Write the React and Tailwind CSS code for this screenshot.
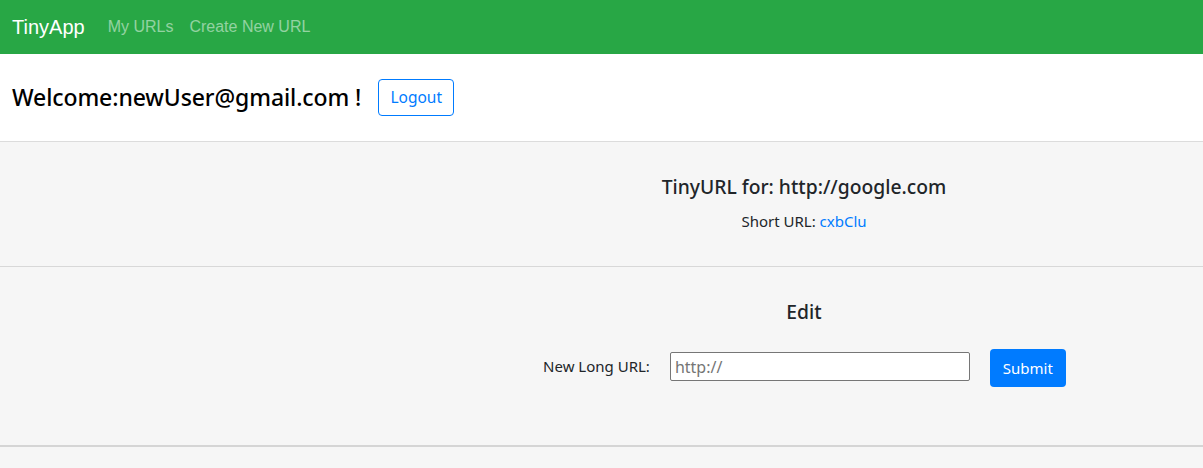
export default function App() {
  const body = { fontFamily: '"Noto Sans", "Open Sans", sans-serif' };
  return (
    <div className="min-h-[468px] bg-[#f6f6f6] text-[#212529]" style={body}>
      <nav
        className="flex h-[54px] items-center bg-[#28a745] pl-3"
        style={{ fontFamily: '"Liberation Sans", Arial, sans-serif' }}
      >
        <span className="mr-[23px] text-[20px] text-white">TinyApp</span>
        <span className="mr-4 text-[16px] text-white/50">My URLs</span>
        <span className="text-[16px] text-white/50">Create New URL</span>
      </nav>

      <div className="flex h-[88px] items-center border-b border-[#dcdcdc] bg-white pl-3">
        <h3 className="text-[23px] font-medium tracking-[-0.1px] text-black">Welcome:newUser@gmail.com !</h3>
        <button className="ml-[17px] h-[37px] w-[76px] rounded-[4px] border border-[#007bff] text-[15.5px] text-[#007bff]">
          Logout
        </button>
      </div>

      <div className="grid h-[125px] grid-cols-[405px_1fr] border-b border-[#d8d8d8]">
        <div />
        <div className="flex flex-col items-center pt-[33px]">
          <h5 className="text-[19.3px] font-medium leading-[24px]">TinyURL for: http://google.com</h5>
          <p className="mt-[10px] text-[15px] leading-[24px]">
            Short URL: <a className="text-[#007bff]">cxbClu</a>
          </p>
        </div>
      </div>

      <div className="grid h-[180px] grid-cols-[406px_1fr] border-b-2 border-[#d5d5d5]">
        <div />
        <div className="flex flex-col items-center pt-[33px]">
          <h5 className="-ml-px text-[19.3px] font-medium leading-[24px]">Edit</h5>
          <div className="mt-[22px] flex items-center">
            <label className="mr-[20px] text-[15px]">New Long URL:</label>
            <input
              className="h-[29px] w-[300px] rounded-[2px] border border-[#767676] bg-white px-1 text-[16px] placeholder:text-[#757575]"
              placeholder="http://"
            />
            <button className="ml-[20px] mt-[3px] h-[38px] w-[76px] rounded-[4px] bg-[#007bff] text-[15px] text-white">
              Submit
            </button>
          </div>
        </div>
      </div>
    </div>
  );
}
